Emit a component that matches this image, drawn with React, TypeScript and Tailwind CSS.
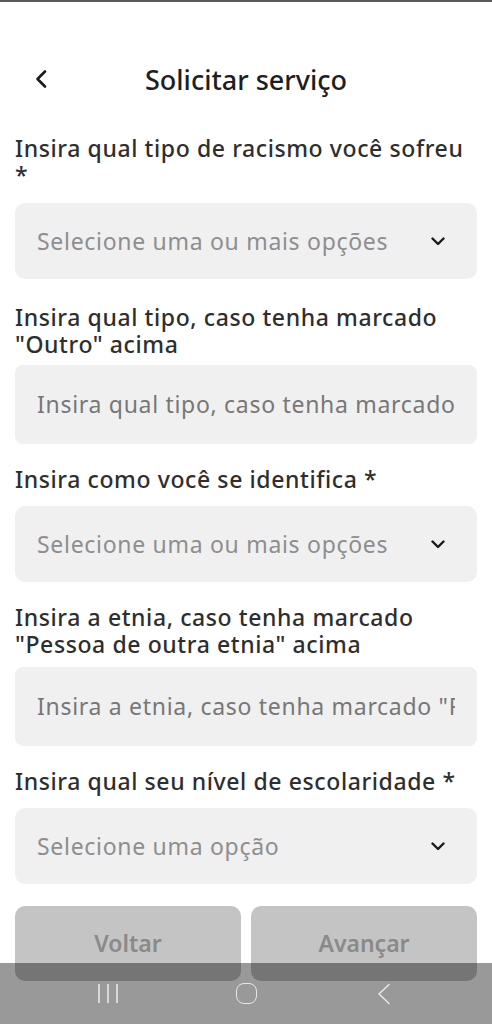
import React from "react";

function Chevron() {
  return (
    <svg width="14" height="9" viewBox="0 0 14 9" fill="none" className="shrink-0">
      <path d="M1.5 1.5 L7 7 L12.5 1.5" stroke="#1a1a1a" strokeWidth="2.4" strokeLinecap="round" strokeLinejoin="round" />
    </svg>
  );
}

function Label({ children, className = "" }: { children: React.ReactNode; className?: string }) {
  return (
    <div className={"text-[23px] leading-[27px] font-medium tracking-[0.6px] text-[#2e2e2e] " + className}>{children}</div>
  );
}

function SelectBox({ text, className = "" }: { text: string; className?: string }) {
  return (
    <div className={"h-[76px] rounded-[10px] bg-[#f0f0f0] flex items-center justify-between pl-[22px] pr-[32px] " + className}>
      <span className="text-[23px] tracking-[0.7px] text-[#8e8e8e] whitespace-nowrap overflow-hidden">{text}</span>
      <Chevron />
    </div>
  );
}

function InputBox({ text, className = "" }: { text: string; className?: string }) {
  return (
    <div className={"h-[79px] rounded-[8px] bg-[#f0f0f0] flex items-center pl-[22px] pr-[22px] overflow-hidden " + className}>
      <span className="text-[23px] tracking-[0.7px] text-[#777777] whitespace-nowrap overflow-hidden">{text}</span>
    </div>
  );
}

export default function App() {
  return (
    <div
      className="relative w-[492px] h-[1024px] bg-white overflow-hidden"
      style={{ fontFamily: '"Noto Sans", "Open Sans", sans-serif' }}
    >
      <div className="h-[2px] bg-[#5a5a5a]" />
      {/* Header */}
      <div className="relative mt-[48px] h-[60px] flex items-center justify-center">
        <div className="absolute left-[34px] top-[19px]">
          <svg width="14" height="20" viewBox="0 0 14 20" fill="none">
            <path d="M11 2.5 L3.5 10 L11 17.5" stroke="#1a1a1a" strokeWidth="2.6" strokeLinecap="round" strokeLinejoin="round" />
          </svg>
        </div>
        <div className="text-[27px] font-medium text-[#1e1e1e]">Solicitar serviço</div>
      </div>

      <div className="px-[15px] flex flex-col">
        <Label className="mt-[25px]">
          Insira qual tipo de racismo você sofreu
          <br />*
        </Label>
        <SelectBox className="mt-[14px]" text="Selecione uma ou mais opções" />

        <Label className="mt-[25px]">
          Insira qual tipo, caso tenha marcado
          <br />"Outro" acima
        </Label>
        <InputBox className="mt-[7px]" text={'Insira qual tipo, caso tenha marcado "Outro" acima'} />

        <Label className="mt-[22px]">Insira como você se identifica *</Label>
        <SelectBox className="mt-[13px]" text="Selecione uma ou mais opções" />

        <Label className="mt-[22px]">
          Insira a etnia, caso tenha marcado
          <br />"Pessoa de outra etnia" acima
        </Label>
        <InputBox className="mt-[9px]" text={'Insira a etnia, caso tenha marcado "Pessoa de outra etnia" acima'} />

        <Label className="mt-[22px]">Insira qual seu nível de escolaridade *</Label>
        <SelectBox className="mt-[13px]" text="Selecione uma opção" />

        <div className="mt-[22px] grid grid-cols-2 gap-[10px]">
          <div className="h-[75px] rounded-[10px] bg-[#c4c4c4] flex items-center justify-center">
            <span className="text-[23px] font-semibold text-[#8a8a8a]">Voltar</span>
          </div>
          <div className="h-[75px] rounded-[10px] bg-[#c4c4c4] flex items-center justify-center">
            <span className="text-[23px] font-semibold text-[#8a8a8a]">Avançar</span>
          </div>
        </div>
      </div>

      {/* Android nav bar overlay */}
      <div className="absolute left-0 right-0 bottom-0 h-[61px] bg-black/40 flex items-start justify-center gap-[114px] pt-[20px]">
        <div className="w-[24px] flex justify-center">
          <svg width="22" height="22" viewBox="0 0 22 22" fill="none">
            <path d="M2 1 V20 M11 1 V20 M20 1 V20" stroke="#e6e6e6" strokeWidth="1.6" />
          </svg>
        </div>
        <div className="w-[24px] flex justify-center">
          <div className="w-[21px] h-[21px] rounded-[8px] border-[1.6px] border-[#e6e6e6]" />
        </div>
        <div className="w-[24px] flex justify-center">
          <svg width="16" height="22" viewBox="0 0 16 22" fill="none">
            <path d="M13 1.5 L3 11 L13 20.5" stroke="#e6e6e6" strokeWidth="1.6" strokeLinecap="round" strokeLinejoin="round" />
          </svg>
        </div>
      </div>
    </div>
  );
}
